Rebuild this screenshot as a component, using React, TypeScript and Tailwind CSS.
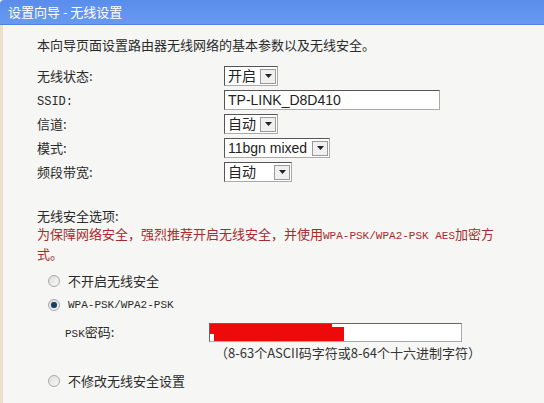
import React from "react";

const cjk = "font-['Noto_Sans_CJK_SC','Noto_Sans',sans-serif]";
const mono = "font-['Liberation_Mono','Noto_Sans_CJK_SC',monospace]";

const Arrow = () => (
  <span className="ml-auto flex h-[15px] w-[16px] shrink-0 items-center justify-center border border-[#9a9a9a] bg-[#f0f0f0]">
    <svg width="7" height="4" viewBox="0 0 7 4">
      <path d="M0 0h7L3.5 4z" fill="#222" />
    </svg>
  </span>
);

const Select = ({ value, width }: { value: string; width: string }) => (
  <div
    className={`flex h-[20px] shrink-0 items-center border border-[#555] border-b-[#aaa] border-r-[#aaa] bg-white pl-[3px] pr-[1px] ${width}`}
  >
    <span className="mr-[3px] whitespace-nowrap text-[14px] leading-none text-[#222] font-['Liberation_Sans','Noto_Sans_CJK_SC',sans-serif]">
      {value}
    </span>
    <Arrow />
  </div>
);

const Radio = ({ checked }: { checked?: boolean }) => (
  <span className="flex h-[12px] w-[12px] items-center justify-center rounded-full border border-[#a8a8a8] bg-gradient-to-br from-[#dcdcdc] to-[#fafafa]">
    {checked && <span className="h-[6px] w-[6px] rounded-full bg-[#1f3d5c] shadow-[0_0_1px_#6a9ac8]" />}
  </span>
);

const rows: { label: React.ReactNode; control: React.ReactNode }[] = [
  { label: "无线状态:", control: <Select value="开启" width="w-[54px]" /> },
  {
    label: <span className={mono + " text-[12px]"}>SSID:</span>,
    control: (
      <div className="flex h-[20px] w-[216px] items-center border border-[#555] border-b-[#aaa] border-r-[#aaa] bg-white pl-[3px]">
        <span className="text-[14px] leading-none text-[#222] font-['Liberation_Sans',sans-serif]">TP-LINK_D8D410</span>
      </div>
    ),
  },
  { label: "信道:", control: <Select value="自动" width="w-[54px]" /> },
  { label: "模式:", control: <Select value="11bgn mixed" width="w-[106px]" /> },
  { label: "频段带宽:", control: <Select value="自动" width="w-[68px]" /> },
];

export default function App() {
  return (
    <div className={`h-[403px] w-[544px] overflow-hidden bg-[#f6f6f4] ${cjk} text-[13px] text-[#2a2a2a]`}>
      <div className="flex h-[25px] items-center rounded-tl-[4px] border-b border-[#5283dc] bg-gradient-to-b from-[#5a8deb] to-[#6799f0] pl-[8px] text-[13px] text-white">
        设置向导 - 无线设置
      </div>
      <div className="h-[378px] border-l-[3px] border-[#ebe0cc] pl-[34px]">
        <div className="pt-[10px] leading-[20px]">本向导页面设置路由器无线网络的基本参数以及无线安全。</div>

        <div className="mt-[9px] flex flex-col">
          {rows.map((r, i) => (
            <div key={i} className="flex h-[24px] items-center">
              <div className="w-[187px] shrink-0">{r.label}</div>
              {r.control}
            </div>
          ))}
        </div>

        <div className="mt-[23px] leading-[18px]">无线安全选项:</div>
        <div className="leading-[18px] text-[#a82a2a]">
          为保障网络安全，强烈推荐开启无线安全，并使用
          <span className={mono + " text-[11px]"}>WPA-PSK/WPA2-PSK AES</span>加密方
          <br />
          式。
        </div>

        <div className="mt-[6px] flex h-[24px] items-center pl-[11px]">
          <Radio />
          <span className="ml-[8px]">不开启无线安全</span>
        </div>
        <div className="flex h-[24px] items-center pl-[11px]">
          <Radio checked />
          <span className={`ml-[8px] ${mono} text-[11px]`}>WPA-PSK/WPA2-PSK</span>
        </div>
        <div className="mt-[3px] flex h-[24px] items-center pl-[28px]">
          <span className="w-[144px] shrink-0">
            <span className={mono + " text-[11px]"}>PSK</span>密码:
          </span>
          <div className="relative h-[19px] w-[253px] border border-[#666] border-b-[#aaa] border-r-[#aaa] bg-white">
            <svg className="absolute left-0 top-0" width="135" height="17" viewBox="0 0 135 17">
              <path d="M0 0H122V3H134V17H4V10H0Z" fill="#ee0a0a" />
            </svg>
          </div>
        </div>
        <div className="pl-[178px] leading-[18px] text-[#333]">（8-63个ASCII码字符或8-64个十六进制字符）</div>

        <div className="mt-[7px] flex h-[24px] items-center pl-[11px]">
          <Radio />
          <span className="ml-[8px]">不修改无线安全设置</span>
        </div>
      </div>
    </div>
  );
}
